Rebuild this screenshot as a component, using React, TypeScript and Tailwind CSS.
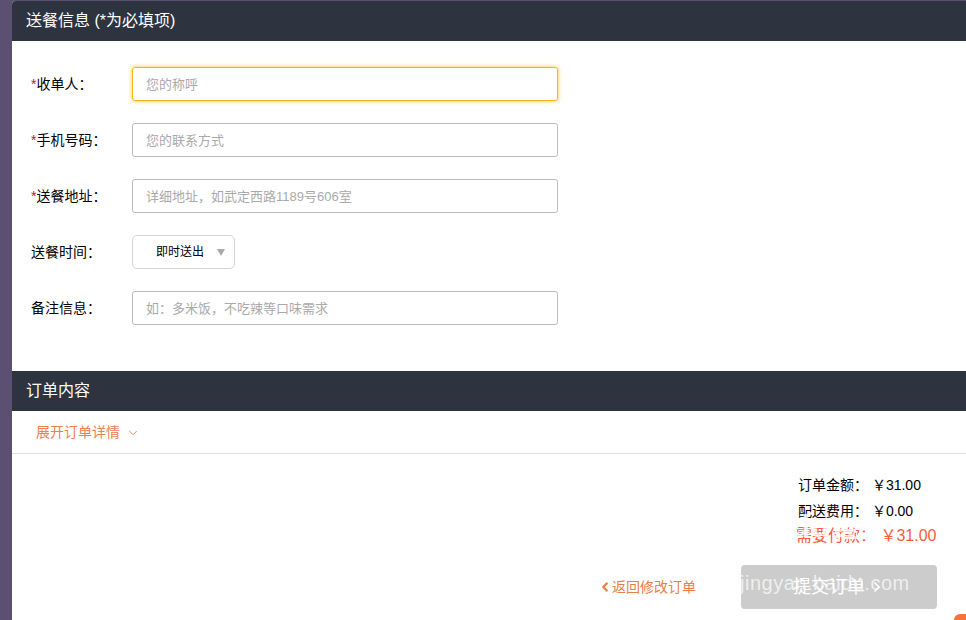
import React from 'react';
import { ChevronDown, ChevronLeft, ChevronRight } from 'lucide-react';

const font = 'font-["Liberation_Sans","Noto_Sans_CJK_SC",sans-serif]';

const fields = [
    { label: '收单人：', required: true, placeholder: '您的称呼', focused: true },
    { label: '手机号码：', required: true, placeholder: '您的联系方式' },
    { label: '送餐地址：', required: true, placeholder: '详细地址，如武定西路1189号606室' },
];

const SectionHeader: React.FC<{ title: string }> = ({ title }) => (
    <div className="h-10 shrink-0 bg-[#2d333f] pl-3.5 text-base leading-10 text-white">{title}</div>
);

const FieldRow: React.FC<{ label: string; required?: boolean; children: React.ReactNode }> = ({ label, required, children }) => (
    <div className="flex h-[34px] items-center">
        <label className="w-[120px] pl-[19px] text-sm text-black">
            {required && <span className="text-[#e4002b]">*</span>}
            {label}
        </label>
        {children}
    </div>
);

const App: React.FC = () => {
    return (
        <div className={`flex h-[620px] w-[966px] overflow-hidden bg-[#5b5072] ${font}`}>
            <div className="relative mt-px flex w-[954px] ml-3 flex-col overflow-hidden rounded-tl-[4px] bg-white">
                <SectionHeader title="送餐信息 (*为必填项)" />
                <form className="flex h-[330px] shrink-0 flex-col gap-[22px] pt-[26px]">
                    {fields.map((f) => (
                        <FieldRow key={f.label} label={f.label} required={f.required}>
                            <input
                                readOnly
                                placeholder={f.placeholder}
                                className={
                                    f.focused
                                        ? 'h-[34px] w-[426px] rounded-[3px] border border-[#f5b51b] pl-[13px] text-[13px] shadow-[0_0_4px_#fbc02d] outline-none placeholder:text-[#aaaaaa]'
                                        : 'h-[34px] w-[426px] rounded-[3px] border border-[#bbbbbb] pl-[13px] text-[13px] outline-none placeholder:text-[#aaaaaa]'
                                }
                            />
                        </FieldRow>
                    ))}
                    <FieldRow label="送餐时间：">
                        <div className="flex h-[34px] w-[103px] items-center rounded-[5px] border border-[#d4d4d4] pl-[23px] text-xs text-black">
                            即时送出
                            <span className="ml-auto mr-[9px] h-0 w-0 border-x-4 border-t-[7px] border-x-transparent border-t-[#aaaaaa]" />
                        </div>
                    </FieldRow>
                    <FieldRow label="备注信息：">
                        <input
                            readOnly
                            placeholder="如：多米饭，不吃辣等口味需求"
                            className="h-[34px] w-[426px] rounded-[3px] border border-[#bbbbbb] pl-[13px] text-[13px] outline-none placeholder:text-[#aaaaaa]"
                        />
                    </FieldRow>
                </form>
                <SectionHeader title="订单内容" />
                <div className="flex h-[43px] shrink-0 items-center border-b border-[#e0e0e0] pl-6 text-sm text-[#f08050]">
                    展开订单详情
                    <ChevronDown className="ml-1.5 mt-0.5 h-3.5 w-3.5" strokeWidth={1.5} />
                </div>
                <div className="flex flex-col items-start pl-[786px] pt-[18px] text-sm leading-[26px] text-black">
                    <div className="whitespace-nowrap">订单金额：&nbsp;￥31.00</div>
                    <div className="whitespace-nowrap">配送费用：&nbsp;￥0.00</div>
                    <div className="-ml-0.5 whitespace-nowrap text-base text-[#ff5a3c]">需要付款：&nbsp;￥31.00</div>
                </div>
                <div className="mt-[17px] flex items-center pl-[586px]">
                    <a className="flex w-[143px] items-center text-sm text-[#ec7c48]">
                        <ChevronLeft className="h-3.5 w-3.5" strokeWidth={4} />
                        返回修改订单
                    </a>
                    <button className="flex h-11 w-[196px] items-center justify-center gap-1 rounded-[4px] bg-[#cccccc] text-lg text-white">
                        提交订单
                        <ChevronRight className="h-4 w-4" strokeWidth={2.5} />
                    </button>
                </div>
                {/* corner of the orange thing at the bottom right */}
                <div className="absolute bottom-0 right-0 h-1.5 w-3 rounded-tl-full bg-[#f4743b]" />
                {/* baidu watermark */}
                <div className="absolute left-[729px] top-[507px] text-[32px] font-bold leading-9 text-white/80">
                    Baidu<span className="ml-1 text-2xl">经验</span>
                </div>
                <div className="absolute left-[728px] top-[573px] -mt-[3px] text-xl leading-6 tracking-[0.5px] text-white/70">jingyan.baidu.com</div>
            </div>
        </div>
    );
};

export default App;
